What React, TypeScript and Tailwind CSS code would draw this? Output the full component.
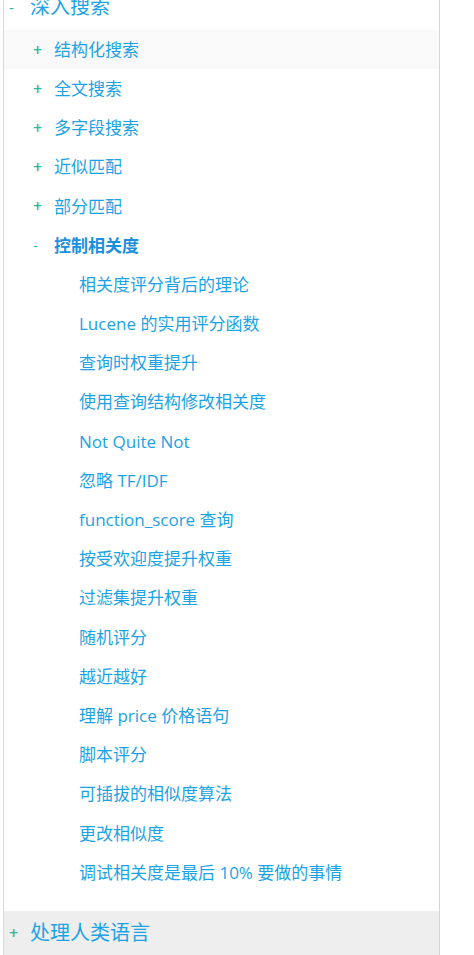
import React from "react";

const subs = [
  "相关度评分背后的理论",
  "Lucene 的实用评分函数",
  "查询时权重提升",
  "使用查询结构修改相关度",
  "Not Quite Not",
  "忽略 TF/IDF",
  "function_score 查询",
  "按受欢迎度提升权重",
  "过滤集提升权重",
  "随机评分",
  "越近越好",
  "理解 price 价格语句",
  "脚本评分",
  "可插拔的相似度算法",
  "更改相似度",
  "调试相关度是最后 10% 要做的事情",
];

const level2 = ["结构化搜索", "全文搜索", "多字段搜索", "近似匹配", "部分匹配"];

const font = { fontFamily: '"Open Sans", "Noto Sans CJK SC", sans-serif' };

export default function App() {
  return (
    <div className="w-[474px] h-[955px] overflow-hidden bg-white" style={font}>
      <div className="w-[437px] h-[955px] border-l border-r border-[#d6d6d6] ml-[3px] flex flex-col">
        <div className="mt-[-15px] h-[45px] flex items-center pl-[5px] text-[20px] text-[#1ba3e6]">
          <span className="w-[21px] text-[#2bb89c] text-[15px]">-</span>
          <span>深入搜索</span>
        </div>
        {level2.map((t, i) => (
          <div
            key={t}
            className={`h-[39.25px] flex items-center pl-[29px] text-[17px] text-[#1ba3e6] ${i === 0 ? "bg-[#f9f9f9]" : ""}`}
          >
            <span className="w-[21px] text-[#2bb89c] text-[16px] font-semibold">+</span>
            <span>{t}</span>
          </div>
        ))}
        <div className="h-[39.25px] flex items-center pl-[29px] text-[17px] text-[#1a8fde] font-bold">
          <span className="w-[21px] text-[#2bb89c] text-[15px] font-normal">-</span>
          <span>控制相关度</span>
        </div>
        {subs.map((t) => (
          <div key={t} className="h-[39.25px] flex items-center pl-[75px] text-[17px] text-[#1ba3e6]">
            {t}
          </div>
        ))}
        <div className="h-[19px]" />
        <div className="h-[44px] flex items-center pl-[5px] text-[20px] text-[#1ba3e6] bg-[#eeeeee]">
          <span className="w-[21px] text-[#2bb89c] text-[16px] font-semibold">+</span>
          <span>处理人类语言</span>
        </div>
      </div>
    </div>
  );
}
